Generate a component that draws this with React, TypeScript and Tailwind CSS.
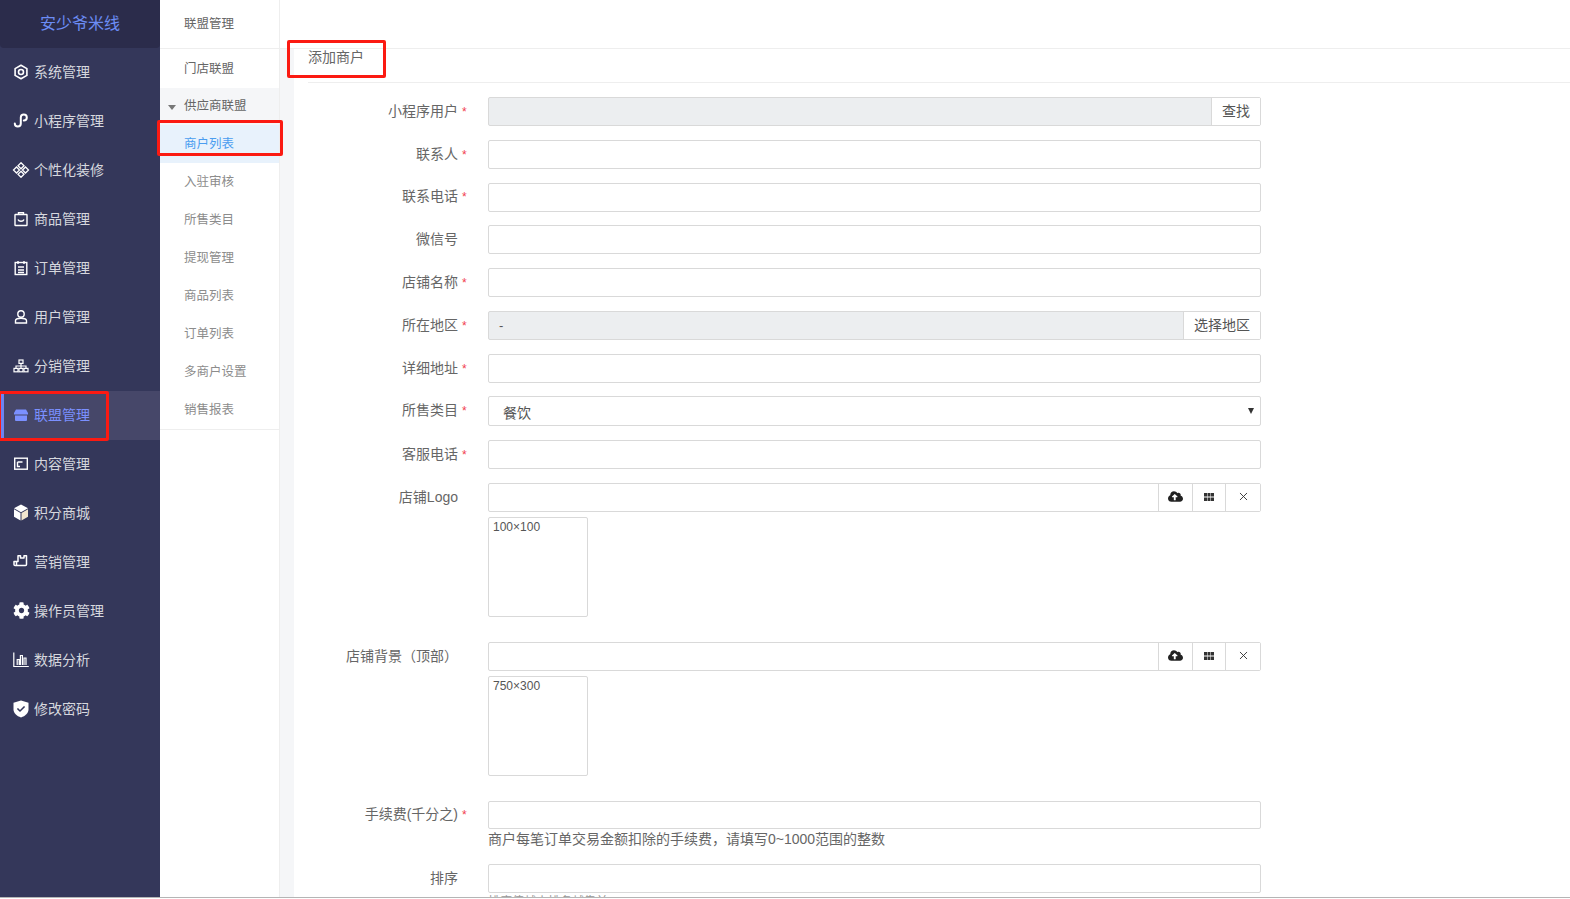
import React from "react";
import { FaCloudUploadAlt, FaCog, FaCheck } from "react-icons/fa";
import { FiX } from "react-icons/fi";

const Ic = ({ children, w = 16, sw = 1.4 }: { children: React.ReactNode; w?: number; sw?: number }) => (
  <svg width={w} height="16" viewBox={`0 0 ${w} 16`} fill="none" stroke="currentColor" strokeWidth={sw} className="shrink-0">{children}</svg>
);

const icons: Record<string, React.ReactNode> = {
  sys: <Ic sw={1.6}><path d="M8 1.200l5.900 3.400v6.800L8 14.800l-5.900-3.400V4.600z" strokeLinejoin="round" /><circle cx="8" cy="8" r="2.500" /></Ic>,
  mini: <Ic sw={2}><path d="M1.800 10.500a3 3 0 1 0 6 0V4.500a3 3 0 1 1 3 3" strokeLinecap="round" /></Ic>,
  deco: <Ic w={18} sw={1.3}><path d="M9 .8l3 3-3 3-3-3zM4.500 5l3 3-3 3-3-3zM13.500 5l3 3-3 3-3-3zM9 9.300l3 3-3 3-3-3z" /></Ic>,
  goods: <Ic><rect x="2" y="3.500" width="12" height="11" rx="0.500" /><path d="M5.500 3.500V1.800h5v1.700M5 8.500c1 2.400 5 2.400 6 0" /></Ic>,
  order: <Ic><rect x="2.200" y="2.500" width="11.600" height="12" /><path d="M5 1v3M11 1v3M5 7h6M5 10h6M5 12.500h6" /></Ic>,
  user: <Ic><circle cx="8" cy="5" r="3.200" /><path d="M2.500 14v-2.200c0-1.200 2-2.600 5.500-2.600s5.500 1.400 5.500 2.600V14z" /></Ic>,
  dist: <Ic sw={1.2}><rect x="6" y="2" width="4" height="3.400" /><rect x="1" y="10.400" width="4" height="3.400" /><rect x="6" y="10.400" width="4" height="3.400" /><rect x="11" y="10.400" width="4" height="3.400" /><path d="M3 10.400V8h10v2.400M8 5.400v5" /></Ic>,
  league: <svg width="16" height="16" viewBox="0 0 16 16" fill="currentColor" className="shrink-0"><path d="M3 2.500h10l2 3.500v1.500H1V6z" /><path d="M2 8.600h12v4.400a1 1 0 0 1-1 1H3a1 1 0 0 1-1-1z" /></svg>,
  content: <Ic><rect x="1.700" y="2.200" width="12.600" height="11" /><path d="M4.500 6h5M4.500 6v4.500h2.500" /></Ic>,
  points: <svg width="16" height="17" viewBox="0 0 16 17" className="shrink-0"><path d="M8 .5l7 3.800L8 8.200 1 4.300z" fill="#ffffff" /><path d="M1 5.300l6.500 3.700v7.500L1 12.800z" fill="#ffffff" /><path d="M15 5.300L8.500 9v7.500l6.500-3.700z" fill="#f2e6cf" /></svg>,
  market: <Ic sw={1.5}><path d="M5 3V1.800h2.500V4H11V1.800h2.500V10.500a1 1 0 0 1-1 1H2a1 1 0 0 1-1-1V7.500h2.500V11M1 7.500h4V3" strokeLinejoin="round" /></Ic>,
  op: <FaCog size={17} className="shrink-0" />,
  data: <Ic sw={1.2}><path d="M.8 .5v14h15M4.200 13V7.500h2V13M7.400 13V3.500h2V13M11 13V6h2v7" /></Ic>,
  pwd: <span className="relative flex shrink-0 text-white"><svg width="16" height="18" viewBox="0 0 16 18" fill="currentColor"><path d="M8 .5l7.500 2.200v6.600c0 4-3.200 6.800-7.500 8.200C3.700 16.100.5 13.300.5 9.300V2.700z" /></svg><FaCheck size={8} className="absolute left-[4px] top-[5px] text-[#34375a]" /></span>,
};

const menu = [
  ["sys", "系统管理"], ["mini", "小程序管理"], ["deco", "个性化装修"], ["goods", "商品管理"], ["order", "订单管理"],
  ["user", "用户管理"], ["dist", "分销管理"], ["league", "联盟管理"], ["content", "内容管理"], ["points", "积分商城"],
  ["market", "营销管理"], ["op", "操作员管理"], ["data", "数据分析"], ["pwd", "修改密码"],
];

const Sidebar = () => (
  <aside className="w-[160px] shrink-0 bg-[#34375a] flex flex-col">
    <div className="h-[48px] bg-[#2b2c4b] rounded-b-[4px] flex items-center justify-center text-[16px] text-[#6c8cf5]">安少爷米线</div>
    {menu.map(([k, t]) => {
      const active = t === "联盟管理";
      return (
        <div key={t} className={`h-[49px] flex items-center gap-[5px] pl-[13px] text-[14px] ${active ? "bg-[#464769] text-[#7b90ff] shadow-[inset_4px_0_0_#6d83f2]" : "text-[#d6d7de]"}`}>
          <span className={`flex w-[16px] justify-center mb-[2px] ${active ? "text-[#7b90ff]" : "text-white"}`}>{icons[k]}</span>
          <span>{t}</span>
        </div>
      );
    })}
  </aside>
);

const SubItem = ({ t, cls = "" }: { t: string; cls?: string }) => (
  <div className={`h-[38px] flex items-center pl-[24px] text-[12.500px] text-[#8c8c8c] ${cls}`}>{t}</div>
);

const SubMenu = () => (
  <nav className="w-[120px] shrink-0 bg-white border-r border-[#eeeeee] flex flex-col">
    <div className="h-[49px] shrink-0 flex items-center pl-[24px] text-[12.500px] text-[#666666] border-b border-[#eeeeee]">联盟管理</div>
    <SubItem t="门店联盟" cls="!h-[39px] pt-[1px] text-[#666666]" />
    <div className="h-[37px] bg-[#f5f6f8] flex items-center pl-[8px] gap-[8px] text-[12.500px] text-[#666666]">
      <span className="w-0 h-0 border-x-[4px] border-x-transparent border-t-[5px] border-t-[#777777] mt-[2px]" />
      供应商联盟
    </div>
    <SubItem t="商户列表" cls="bg-[#e8f2fc] !text-[#4a9df0]" />
    {["入驻审核", "所售类目", "提现管理", "商品列表", "订单列表", "多商户设置", "销售报表"].map((t) => <SubItem key={t} t={t} />)}
    <div className="border-t border-[#eeeeee]" />
  </nav>
);

const Label = ({ t, req, lift }: { t: string; req?: boolean; lift?: boolean }) => (
  <div className={`w-[194px] shrink-0 flex items-center justify-end text-[14px] text-[#666666] ${lift ? "h-[27px]" : "h-[29px]"}`}>
    <span>{t}</span>
    <span className={`w-[30px] pl-[4px] text-[#f1404f] text-[12px] ${req ? "" : "invisible"}`}>*</span>
  </div>
);

const Box = "border border-[#d9d9d9] rounded-[2px] bg-white";

const Row = ({ t, req, lift, mb = "mb-[14px]", children }: { t: string; req?: boolean; lift?: boolean; mb?: string; children?: React.ReactNode }) => (
  <div className={`flex items-start ${mb}`}>
    <Label t={t} req={req} lift={lift} />
    <div className="w-[773px]">{children ?? <div className={`h-[29px] ${Box}`} />}</div>
  </div>
);

const BtnCell = ({ children, up }: { children: React.ReactNode; up?: boolean }) => (
  <div className={`h-full flex items-center justify-center border-l border-[#d9d9d9] text-[14px] text-[#555555] bg-white ${up ? "pb-[2px]" : ""}`}>{children}</div>
);

const Grid3 = () => (
  <svg width="10" height="8" viewBox="0 0 10 8" fill="#333333"><rect x="0" y="0" width="3" height="3.500" /><rect x="3.500" y="0" width="3" height="3.500" /><rect x="7" y="0" width="3" height="3.500" /><rect x="0" y="4.500" width="3" height="3.500" /><rect x="3.500" y="4.500" width="3" height="3.500" /><rect x="7" y="4.500" width="3" height="3.500" /></svg>
);

const Upload = ({ size }: { size: string }) => (
  <>
    <div className={`h-[29px] flex ${Box}`}>
      <div className="flex-1" />
      <div className="w-[34px]"><BtnCell up><FaCloudUploadAlt size={15} color="#222222" /></BtnCell></div>
      <div className="w-[33px]"><BtnCell up><Grid3 /></BtnCell></div>
      <div className="w-[35px]"><BtnCell up><FiX size={13} color="#333333" strokeWidth={1.7} /></BtnCell></div>
    </div>
    <div className={`mt-[5px] w-[100px] h-[100px] pl-[4px] pt-[1px] text-[12px] leading-[17px] text-[#555555] ${Box}`}>{size}</div>
  </>
);

const Form = () => (
  <div className="pt-[14px]">
    <Row t="小程序用户" req>
      <div className={`h-[29px] flex ${Box} !bg-[#eceef0]`}>
        <div className="flex-1" />
        <div className="w-[49px]"><BtnCell>查找</BtnCell></div>
      </div>
    </Row>
    <Row t="联系人" req />
    <Row t="联系电话" req lift mb="mb-[13px]" />
    <Row t="微信号" />
    <Row t="店铺名称" req />
    <Row t="所在地区" req>
      <div className={`h-[29px] flex ${Box} !bg-[#eceef0]`}>
        <div className="flex-1 pl-[10px] text-[13px] leading-[27px] text-[#555555]">-</div>
        <div className="w-[77px]"><BtnCell>选择地区</BtnCell></div>
      </div>
    </Row>
    <Row t="详细地址" req mb="mb-[13px]" />
    <Row t="所售类目" req>
      <div className={`h-[30px] relative flex items-center pl-[14px] pt-[4px] text-[14px] text-[#555555] ${Box}`}>
        餐饮
        <span className="absolute right-[6px] top-[11px] w-0 h-0 border-x-[3px] border-x-transparent border-t-[6px] border-t-[#333333]" />
      </div>
    </Row>
    <Row t="客服电话" req />
    <Row t="店铺Logo" mb="mb-[25px]"><Upload size="100×100" /></Row>
    <Row t="店铺背景（顶部）" mb="mb-[25px]"><Upload size="750×300" /></Row>
    <Row t="手续费(千分之)" req lift mb="mb-[15px]">
      <div className={`h-[28px] ${Box}`} />
      <div className="text-[14px] leading-[20px] text-[#666666]">商户每笔订单交易金额扣除的手续费，请填写0~1000范围的整数</div>
    </Row>
    <Row t="排序" mb="mb-0">
      <div className={`h-[29px] ${Box}`} />
      <div className="text-[12px] leading-[18px] text-[#999999]">排序值越小排名越靠前</div>
    </Row>
  </div>
);

export default function App() {
  return (
    <div className="relative w-[1570px] h-[899px] overflow-hidden bg-white font-['Liberation_Sans','Noto_Sans_CJK_SC',sans-serif]">
      <div className="flex h-[898px] border-b-[1px] border-[#b5b5b5]">
        <Sidebar />
        <SubMenu />
        <main className="flex-1 flex flex-col min-w-0 overflow-hidden">
          <div className="h-[49px] shrink-0 border-b border-[#eeeeee]" />
          <div className="flex-1 flex min-h-0">
            <div className="w-[14px] shrink-0 bg-[#f5f6f8]" />
            <div className="flex-1 min-w-0 overflow-hidden">
              <div className="h-[34px] ml-[14px] border-b border-[#eeeeee] text-[14px] leading-[16px] text-[#666666]">
                <span>添加商户</span>
              </div>
              <Form />
            </div>
          </div>
        </main>
      </div>
      <div className="absolute left-[287px] top-[40px] w-[99px] h-[38px] border-[3px] border-[#fb1a12] rounded-[2px]" />
      <div className="absolute left-[157px] top-[120px] w-[126px] h-[36px] border-[3px] border-[#fb1a12] rounded-[2px]" />
      <div className="absolute left-[-2px] top-[391px] w-[111px] h-[50px] border-[3px] border-[#fb1a12] rounded-[2px]" />
    </div>
  );
}
